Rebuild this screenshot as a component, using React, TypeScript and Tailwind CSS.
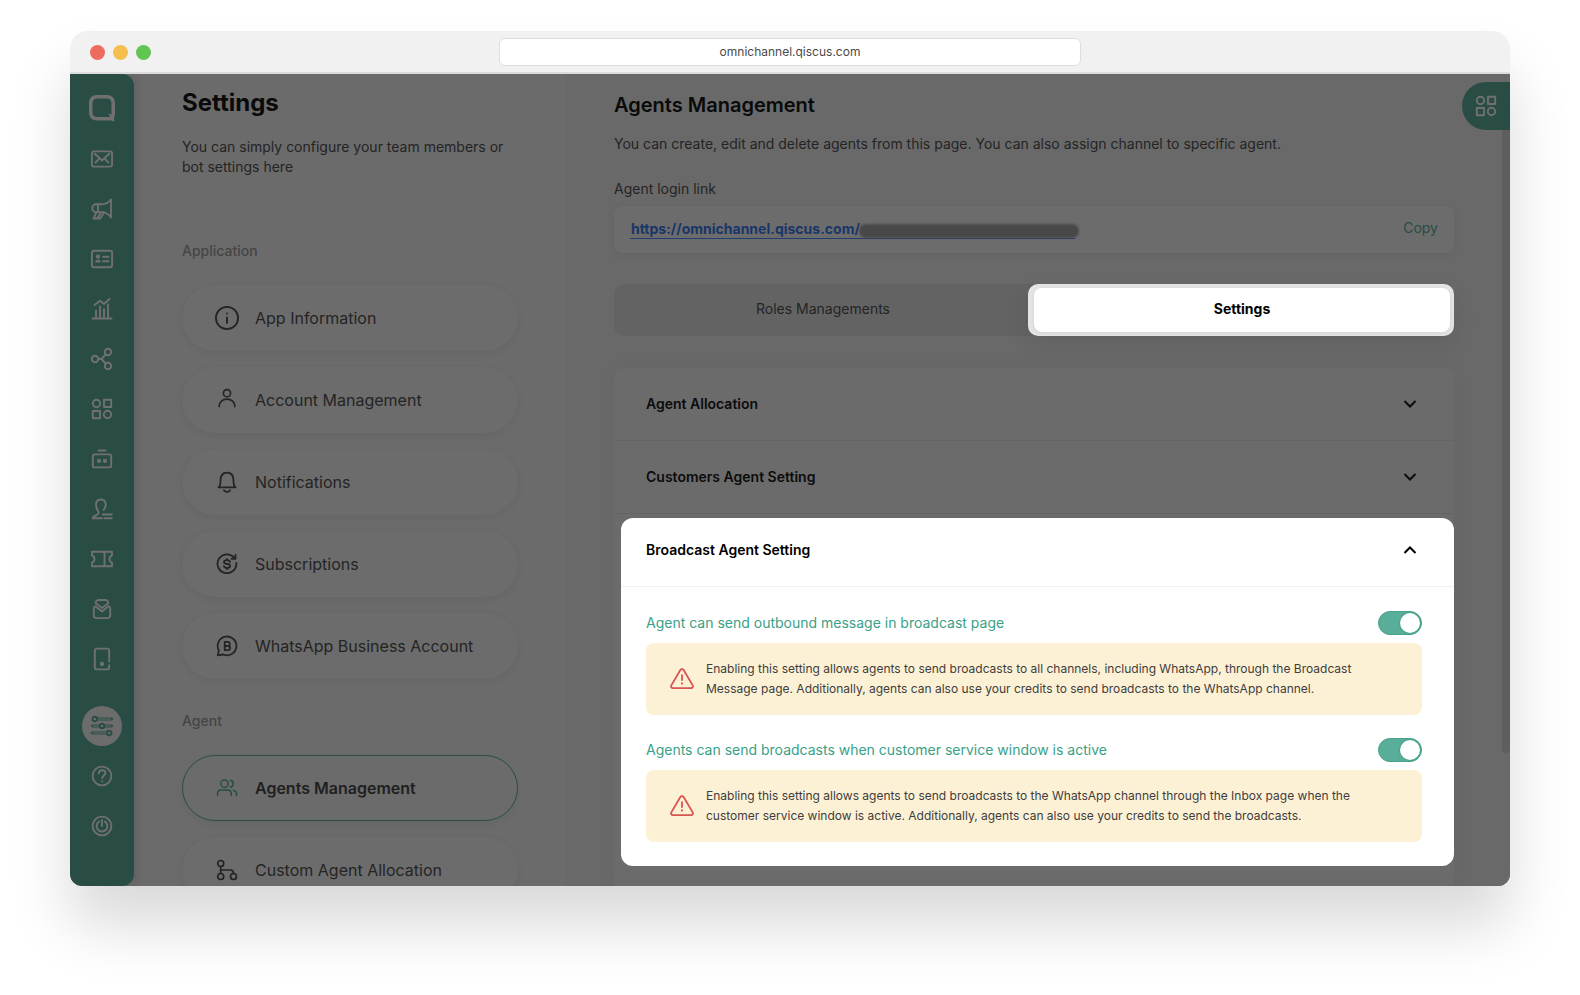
import type { ReactNode } from "react";

type IconProps = { children: ReactNode; className?: string; width?: number };

function Icon({ children, className = "size-6", width = 1.6 }: IconProps) {
  return (
    <svg
      viewBox="0 0 24 24"
      className={className}
      fill="none"
      stroke="currentColor"
      strokeWidth={width}
      strokeLinecap="round"
      strokeLinejoin="round"
      aria-hidden="true"
    >
      {children}
    </svg>
  );
}

const shapes = (
  <>
    <circle cx="6.5" cy="6.5" r="3.7" />
    <rect x="14" y="2.8" width="7.2" height="7.2" />
    <rect x="2.8" y="14" width="7.2" height="7.2" />
    <circle cx="17.5" cy="17.5" r="3.7" />
  </>
);

const navItems: { label: string; icon: ReactNode }[] = [
  {
    label: "Inbox",
    icon: (
      <>
        <rect x="1.9" y="4.4" width="20.2" height="15.2" rx="2" />
        <path d="M4.5 6.5 12 13.5l7.5-7M5.5 15.500l4-4M18.500 15.500l-4-4" />
      </>
    ),
  },
  {
    label: "Broadcast",
    icon: (
      <>
        <path d="M21 2.500v18c-2.600-3.800-6.200-5.400-9.500-5.400H6.200a3.900 3.900 0 0 1 0-7.800h5.300c3.300 0 6.900-1.400 9.500-4.800Z" />
        <path d="M8 7.300v7.800M6.500 15.300l-3 6.200h3.800l3.700-6.200M14 15.500l-3.800 6H7.300" />
      </>
    ),
  },
  {
    label: "Contacts",
    icon: (
      <>
        <rect x="1.900" y="3.700" width="20.200" height="16.600" rx="2" />
        <circle cx="8" cy="9.700" r="1.200" fill="currentColor" />
        <path d="M6.200 14.600c.8-1.200 2.800-1.200 3.600 0ZM13 9.800h5.500M13 14.300h5.500" />
      </>
    ),
  },
  {
    label: "Analytics",
    icon: (
      <>
        <path d="M2.500 21.500h19M6 20v-6.500M10 20V9.500M14 20v-8M18 20V7.500" />
        <path d="M4.500 8 10 3.800l4 3.200 5.500-5" />
      </>
    ),
  },
  {
    label: "Integration",
    icon: (
      <>
        <circle cx="5" cy="12" r="3.200" />
        <circle cx="18" cy="5" r="3.200" />
        <circle cx="18" cy="19" r="3.200" />
        <path d="M8.200 12h3.300l4.200-4.700M11.500 12l4.200 4.700" />
      </>
    ),
  },
  { label: "Apps", icon: shapes },
  {
    label: "Chatbot",
    icon: (
      <>
        <path d="M8.500 3.500h7" />
        <rect x="2.800" y="7.400" width="18.400" height="13" rx="2" />
        <circle cx="9" cy="13.900" r="1.200" fill="currentColor" />
        <circle cx="15" cy="13.900" r="1.200" fill="currentColor" />
      </>
    ),
  },
  {
    label: "Customers",
    icon: (
      <>
        <path d="M12 21.300H2.800c-.2-2.700 5.900-3.200 6-5.500 0-1.800-2.800-3-2.800-8 0-3.500 2-5.300 4.800-5.300s4.900 1.800 4.900 5.300c0 3-1.400 4.300-2 5.200" />
        <path d="M12.800 17.500h9M14.500 21.300h7.300" />
      </>
    ),
  },
  {
    label: "Tickets",
    icon: (
      <path d="M2 4.700h20v3.600a4 4 0 0 0 0 7.400v3.600H2v-3.600a4 4 0 0 0 0-7.400ZM14.500 5v14" />
    ),
  },
  {
    label: "Forms",
    icon: (
      <>
        <path d="M5.400 9.300c-1.100.3-1.600.9-1.600 2v7c0 1.800 1 2.800 2.800 2.800h10.800c1.800 0 2.800-1 2.800-2.800v-7c0-1.100-.5-1.700-1.600-2L12 14.600 5.400 9.300Z" />
        <path d="M6 6.600c-.6-1.700.5-3.600 2.200-3.600h7.600c1.700 0 2.800 1.900 2.200 3.600L12 11Z" />
      </>
    ),
  },
  {
    label: "Devices",
    icon: (
      <>
        <path d="M19.200 14.500V3.800c0-1.300-.8-2.200-2.200-2.200H7c-1.400 0-2.200.9-2.200 2.200v16.400c0 1.300.8 2.200 2.200 2.200h10c1.400 0 2.200-.9 2.200-2.200V18.200" />
        <circle cx="12" cy="17" r="1.200" fill="currentColor" />
      </>
    ),
  },
];

const applicationItems: { label: string; icon: ReactNode }[] = [
  {
    label: "App Information",
    icon: (
      <Icon className="size-7" width={1.6}>
        <circle cx="12" cy="12" r="9.500" />
        <path d="M12 11.600v4.600M12 8v.1" />
      </Icon>
    ),
  },
  {
    label: "Account Management",
    icon: (
      <Icon width={1.6}>
        <circle cx="12" cy="5.200" r="3.600" />
        <path d="M4.200 18.800v-1a7.800 6.700 0 0 1 15.600 0v1" />
      </Icon>
    ),
  },
  {
    label: "Notifications",
    icon: (
      <Icon width={1.8}>
        <path d="M3.500 17.300h17c-1.500-1-2-3.300-2-6.500 0-5-2-8.100-6.500-8.100s-6.500 3.100-6.500 8.100c0 3.200-.5 5.500-2 6.500ZM9 20.300c1 2 5 2 6 0" />
      </Icon>
    ),
  },
  {
    label: "Subscriptions",
    icon: (
      <Icon width={1.800}>
        <path d="M21.300 11a9.400 9.400 0 1 1-2.200-5.300M20.500 2.800v4h-4" />
        <path d="M15 9.800c-.4-1-1.500-1.600-3-1.600-4 0-4 3.600 0 3.800 4.200.2 4 4 0 4-1.600 0-2.800-.6-3.200-1.700M12 7v1M12 16.200v1" />
      </Icon>
    ),
  },
  {
    label: "WhatsApp Business Account",
    icon: (
      <Icon width={1.800}>
        <path d="M2.800 21.300 3.900 16.600a9.400 9.400 0 1 1 4.300 3.900Z" />
        <path d="M9.700 7.800h3a2 2 0 0 1 0 4.200h-3ZM9.700 12h3.300a2.100 2.100 0 0 1 0 4.200H9.700Z" />
      </Icon>
    ),
  },
];

const agentItems: { label: string; active?: boolean; icon: ReactNode }[] = [
  {
    label: "Agents Management",
    active: true,
    icon: (
      <Icon width={1.500} className="size-6 text-[#294d44]">
        <circle cx="9.500" cy="7.700" r="3.700" />
        <path d="M2.500 19.500v-1.800c0-2.400 1.500-3.800 3.800-3.800h6.200c2.300 0 3.800 1.400 3.800 3.800v1.800M15.500 4.200a3.700 3.700 0 0 1 0 7.100M18.300 14.200c2 .5 3.200 1.600 3.200 3.600v1.700" />
      </Icon>
    ),
  },
  {
    label: "Custom Agent Allocation",
    icon: (
      <Icon width={1.700}>
        <circle cx="5.700" cy="5.500" r="3" />
        <circle cx="5.700" cy="18.500" r="3" />
        <circle cx="18.500" cy="18.500" r="3" />
        <path d="M5.700 8.500v7M5.700 12h9.800c2 0 3 1 3 3.500" />
      </Icon>
    ),
  },
];

function MenuPill({ label, icon, active }: { label: string; icon: ReactNode; active?: boolean }) {
  return (
    <li>
      <a
        href="#menu"
        className={
          active
            ? "flex h-[66px] items-center gap-3.5 rounded-full border border-[#294d44] pr-6 pl-[30px] text-base font-semibold text-[#1f1f1f] shadow-[0_4px_8px_rgba(0,0,0,0.04)]"
            : "flex h-[66px] items-center gap-3.5 rounded-full border border-transparent bg-[#6c6c6c] pr-6 pl-[30px] text-base text-[#242424] shadow-[0_2px_8px_rgba(0,0,0,0.06)]"
        }
      >
        <span className="flex size-7 shrink-0 items-center justify-center">{icon}</span>
        {label}
      </a>
    </li>
  );
}

function Sidebar() {
  return (
    <nav
      aria-label="Main"
      className="flex w-16 shrink-0 flex-col items-center rounded-r-xl rounded-bl-xl bg-[#294d44] pt-[18px] text-[#707070] shadow-[2px_0_8px_rgba(0,0,0,0.12)]"
    >
      <a href="#home" aria-label="Home" className="flex size-8 items-center justify-center">
        <svg viewBox="0 0 30 30" className="size-[30px]" aria-hidden="true">
          <path
            fill="currentColor"
            fillRule="evenodd"
            d="M10 2h10c5 0 8 3 8 8v10.500c0 2-.5 3.500-1.100 4.700l.5 3.300-4.400-1.200c-1 .2-2 .2-3 .2H10c-5 0-8-3-8-8V10c0-5 3-8 8-8Zm.5 3.500c-3.300 0-5 1.700-5 5v8.500c0 3.300 1.700 5 5 5h12.800L21 20.500l3.400 1c.1-.6.1-1.200.1-2v-9c0-3.300-1.700-5-5-5Z"
          />
        </svg>
      </a>
      <ul className="mt-2.5 flex flex-col">
        {navItems.map((item) => (
          <li key={item.label}>
            <a href="#nav" aria-label={item.label} className="flex h-[50px] w-16 items-center justify-center">
              <Icon width={1.900}>{item.icon}</Icon>
            </a>
          </li>
        ))}
      </ul>
      <a
        href="#settings"
        aria-label="Settings"
        className="mt-[22px] flex size-10 items-center justify-center rounded-full bg-[#6c6c6c] text-[#294d44]"
      >
        <Icon width={1.700}>
          <g strokeWidth="4" stroke="#4a5c57">
            <path d="M4 5h17M3.500 12h17M3.500 19h17" />
          </g>
          <g fill="#6c6c6c" strokeWidth="1.900">
            <circle cx="4.800" cy="5" r="2.200" />
            <circle cx="12" cy="12" r="2.200" />
            <circle cx="19.200" cy="19" r="2.200" />
          </g>
          <path strokeWidth="2.200" d="M22 5h.1M2 12h.1M22 12h.1M2 19h.1" />
        </Icon>
      </a>
      <a href="#help" aria-label="Help" className="mt-[5px] flex h-[50px] w-16 items-center justify-center">
        <Icon width={1.900}>
          <circle cx="12" cy="12" r="9.400" />
          <path d="M8.800 9.200c.2-2 1.600-3 3.300-3 1.900 0 3.300 1.200 3.300 2.900 0 2.200-3.200 2.600-3.200 5M12.200 17.200v.1" />
        </Icon>
      </a>
      <a href="#logout" aria-label="Log out" className="flex h-[50px] w-16 items-center justify-center">
        <Icon width={1.900}>
          <circle cx="12" cy="12" r="9.400" />
          <path d="M12 6v6M9.200 7.500a5.400 5.400 0 1 0 5.600 0" />
        </Icon>
      </a>
    </nav>
  );
}

function Toggle({ id }: { id: string }) {
  return (
    <input
      id={id}
      type="checkbox"
      role="switch"
      defaultChecked
      className="flex h-6 w-11 shrink-0 appearance-none items-center rounded-full border border-[#45a38c] bg-[#59ae9a] before:ml-[21px] before:size-5 before:rounded-full before:bg-white before:shadow-[0_0_2px_#23806a] before:content-['']"
    />
  );
}

function BroadcastOption({ id, label, children }: { id: string; label: string; children: ReactNode }) {
  return (
    <div>
      <div className="flex items-center justify-between">
        <label htmlFor={id} className="text-sm leading-6 text-[#3aa087]">
          {label}
        </label>
        <Toggle id={id} />
      </div>
      <div className="mt-2 flex items-center gap-3 rounded-lg bg-[#fdf1d5] py-4 pr-16 pl-6">
        <Icon className="size-6 shrink-0 text-[#d9534f]" width={1.800}>
          <path d="M10.200 3.200a2.100 2.100 0 0 1 3.600 0l8.900 15.200a1.800 1.800 0 0 1-1.600 2.700H2.900a1.800 1.800 0 0 1-1.600-2.700Z" />
          <path d="M12 8.300v4.600M12 16.400v.2" strokeLinecap="square" />
        </Icon>
        <p className="text-xs leading-5 text-[#3d3d3d]">{children}</p>
      </div>
    </div>
  );
}

function Chevron({ up }: { up?: boolean }) {
  return (
    <Icon className="size-6" width={2}>
      <path d={up ? "M7.2 14.300l4.800-4.800 4.800 4.800" : "M7.2 9.700l4.800 4.800 4.800-4.800"} strokeLinecap="square" strokeLinejoin="miter" />
    </Icon>
  );
}

function AccordionRow({ label }: { label: string }) {
  return (
    <button
      type="button"
      className="flex h-[73px] w-full items-center justify-between border-b border-[#646464] px-8 text-left text-sm font-semibold text-[#0c0c0c]"
    >
      {label}
      <Chevron />
    </button>
  );
}

export default function App() {
  return (
    <div className="min-h-screen overflow-hidden bg-white px-[70px] pt-[31px] font-['Inter',sans-serif]">
      <div className="overflow-hidden rounded-t-[18px] rounded-b-xl shadow-[0_40px_60px_rgba(0,0,0,0.15)]">
        <header className="grid h-[43px] grid-cols-[1fr_minmax(0,582px)_1fr] items-center border-b-2 border-[#dcdcdc] bg-[#f1f1f1]">
          <div className="flex gap-2 pt-0.5 pl-5">
            <span className="size-[15px] rounded-full bg-[#ed6b5f]" />
            <span className="size-[15px] rounded-full bg-[#f5bf4f]" />
            <span className="size-[15px] rounded-full bg-[#61c554]" />
          </div>
          <input
            aria-label="Address"
            defaultValue="omnichannel.qiscus.com"
            className="h-7 w-full rounded-md border border-[#dddddd] bg-white text-center text-xs text-[#4a4a4a]"
          />
        </header>

        <div className="flex h-[calc(100vh-183px)] overflow-hidden bg-[#6b6b6b]">
          <Sidebar />

          <aside className="w-[432px] shrink-0 px-12 pt-[11px]">
            <h1 className="text-2xl leading-9 font-bold text-[#0a0a0a]">Settings</h1>
            <p className="mt-4 text-sm leading-5 text-[#242424]">
              You can simply configure your team members or bot settings here
            </p>
            <h2 className="mt-16 text-sm leading-5 font-medium text-[#454545]">Application</h2>
            <ul className="mt-6 flex flex-col gap-4">
              {applicationItems.map((item) => (
                <MenuPill key={item.label} {...item} />
              ))}
            </ul>
            <h2 className="mt-8 text-sm leading-5 font-medium text-[#454545]">Agent</h2>
            <ul className="mt-6 flex flex-col gap-4">
              {agentItems.map((item) => (
                <MenuPill key={item.label} {...item} />
              ))}
            </ul>
          </aside>

          <main className="relative min-w-0 flex-1 overflow-hidden bg-[#696969] pt-[15px] pr-14 pl-12">
            <div className="absolute top-8 right-0 h-[79.7%] w-2 rounded-b bg-[#5e5e5e]" />
            <button
              type="button"
              aria-label="Open apps"
              className="absolute top-2 right-0 flex size-12 items-center justify-center rounded-l-full bg-[#294d44] text-[#707070]"
            >
              <Icon width={1.900}>{shapes}</Icon>
            </button>

            <h2 className="text-xl leading-8 font-semibold text-[#0a0a0a]">Agents Management</h2>
            <p className="mt-[13px] text-sm leading-5 text-[#242424]">
              You can create, edit and delete agents from this page. You can also assign channel to specific agent.
            </p>
            <p className="mt-[25px] text-sm leading-5 text-[#242424]">Agent login link</p>
            <div className="mt-[7px] flex h-[47px] items-center justify-between rounded-lg bg-[#6c6c6c] px-4 text-sm shadow-[0_2px_8px_rgba(0,0,0,0.06)]">
              <a href="#login" className="relative flex items-center border-b border-[#213f73] leading-[18px] font-bold text-[#193668]">
                <span className="ml-px">https://omnichannel.qiscus.com/</span>
                <span className="w-[215px]" />
                <span className="absolute -right-1 bottom-0 h-3.5 w-[220px] rounded-full bg-[#484848] blur-[1px]" />
              </a>
              <button type="button" className="pb-1 text-[#294d44]">
                Copy
              </button>
            </div>

            <div className="mt-[31px] flex h-[52px] rounded-[10px] bg-[#636363]" role="tablist">
              <button type="button" role="tab" aria-selected="false" className="flex-1 pb-0.5 pl-1 text-sm text-[#242424]">
                Roles Managements
              </button>
              <div className="flex w-[426px] shrink-0 rounded-[10px] bg-[#e4e4e4] pt-1 pr-1 pb-1 pl-1.5 shadow-[0_8px_24px_rgba(0,0,0,0.08)]">
                <button
                  type="button"
                  role="tab"
                  aria-selected="true"
                  className="flex-1 rounded-lg bg-white pb-0.5 text-sm font-bold text-black shadow-[0_1px_4px_rgba(0,0,0,0.08)]"
                >
                  Settings
                </button>
              </div>
            </div>

            <div className="mt-8 rounded-lg bg-[#6b6b6b] pb-6 shadow-[0_0_20px_rgba(0,0,0,0.04)]">
              <AccordionRow label="Agent Allocation" />
              <AccordionRow label="Customers Agent Setting" />
              <section className="pt-1 pl-[7px]">
                <div className="rounded-xl bg-white pb-6">
                  <button
                    type="button"
                    aria-expanded="true"
                    className="flex h-[69px] w-full items-center justify-between border-b border-[#f0f0f0] pr-8 pb-1 pl-[25px] text-left text-sm font-semibold text-black"
                  >
                    Broadcast Agent Setting
                    <Chevron up />
                  </button>
                  <div className="flex flex-col gap-[23px] pt-6 pr-8 pl-[25px]">
                    <BroadcastOption id="outbound" label="Agent can send outbound message in broadcast page">
                      Enabling this setting allows agents to send broadcasts to all channels, including WhatsApp,
                      through the Broadcast Message page. Additionally, agents can also use your credits to send
                      broadcasts to the WhatsApp channel.
                    </BroadcastOption>
                    <BroadcastOption
                      id="service-window"
                      label="Agents can send broadcasts when customer service window is active"
                    >
                      Enabling this setting allows agents to send broadcasts to the WhatsApp channel through the Inbox
                      page when the customer service window is active. Additionally, agents can also use your credits
                      to send the broadcasts.
                    </BroadcastOption>
                  </div>
                </div>
              </section>
            </div>
          </main>
        </div>
      </div>
    </div>
  );
}
